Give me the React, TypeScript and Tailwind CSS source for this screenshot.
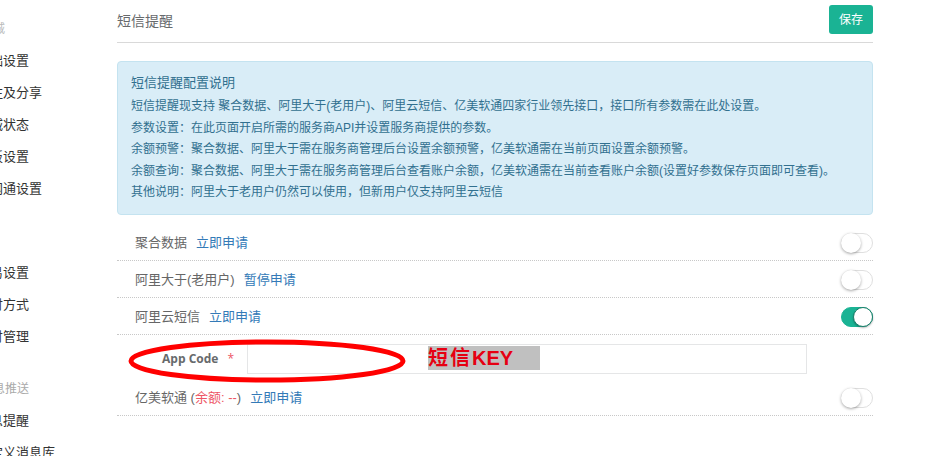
import React, { useState } from 'react';

const font = { fontFamily: '"Liberation Sans", "Noto Sans CJK SC", sans-serif' };

type NavEntry = { label: string; header?: boolean };

const nav: NavEntry[] = [
  { label: '商城', header: true },
  { label: '基础设置' },
  { label: '关注及分享' },
  { label: '商城状态' },
  { label: '模板设置' },
  { label: '全网通设置' },
  { label: '交', header: true },
  { label: '交易设置' },
  { label: '支付方式' },
  { label: '支付管理' },
  { label: '消息推送', header: true },
  { label: '消息提醒' },
  { label: '自定义消息库' },
];

function Sidebar() {
  return (
    <div className="w-[117px] shrink-0 overflow-hidden pt-[13px]">
      {nav.map((n, i) =>
        n.header ? (
          <div
            key={i}
            className={
              i === 0
                ? 'h-8 -ml-[19px] flex items-center whitespace-nowrap text-[12px] text-[#bbb]'
                : 'mt-5 h-8 -ml-[19px] flex items-center whitespace-nowrap text-[12px] text-[#aaa]'
            }
          >
            {n.label}
          </div>
        ) : (
          <div key={i} className="h-8 -ml-[23px] flex items-center whitespace-nowrap text-[13px] text-[#333]">
            {n.label}
          </div>
        )
      )}
    </div>
  );
}

function Toggle({ on, onClick }: { on: boolean; onClick: () => void }) {
  return (
    <button
      onClick={onClick}
      className={
        on
          ? 'relative w-[32px] h-[20px] rounded-full bg-[#1ab394] border border-[#1ab394] shrink-0'
          : 'relative w-[32px] h-[20px] rounded-full bg-white border border-[#dfdfdf] shrink-0'
      }
    >
      <span
        className={
          on
            ? 'absolute top-[-1px] right-[-1px] w-[20px] h-[20px] rounded-full bg-white border border-[#1a7f6a] shadow-[0_1px_2px_rgba(0,0,0,0.3)]'
            : 'absolute top-[-1px] left-[-1px] w-[20px] h-[20px] rounded-full bg-white shadow-[0_1px_3px_rgba(0,0,0,0.35)]'
        }
      />
    </button>
  );
}

function Row({ children, on, onToggle }: { children: React.ReactNode; on: boolean; onToggle: () => void }) {
  return (
    <div className="h-[37px] flex items-center justify-between pl-[18px] pt-[1px] border-b border-dotted border-[#c8c8c8]">
      <div className="flex items-center gap-[9px] text-[13px] text-[#666] leading-none">{children}</div>
      <Toggle on={on} onClick={onToggle} />
    </div>
  );
}

const Link = ({ children }: { children: React.ReactNode }) => (
  <a className="text-[#337ab7] cursor-pointer">{children}</a>
);

export default function App() {
  const [sw, setSw] = useState([false, false, true, false]);
  const flip = (i: number) => setSw(s => s.map((v, j) => (j === i ? !v : v)));

  return (
    <div className="w-[937px] h-[456px] overflow-hidden bg-white flex" style={font}>
      <Sidebar />
      <div className="w-[756px] shrink-0">
        <div className="h-[43px] flex items-start justify-between border-b border-[#d9d9d9]">
          <span className="text-[14px] leading-[42px] text-[#676a6c]">短信提醒</span>
          <button className="mt-[5px] w-[44px] h-[29px] rounded-[3px] bg-[#1ab394] text-white text-[12px]">保存</button>
        </div>

        <div className="mt-[18px] h-[154px] rounded-[4px] bg-[#d9edf7] border border-[#c4e3f0] px-[13px] pt-[11px] text-[#31708f]">
          <div className="text-[13px] leading-[20px] mb-[3px]">短信提醒配置说明</div>
          <div className="text-[12px] leading-[21.5px]">
            <p>短信提醒现支持 聚合数据、阿里大于(老用户)、阿里云短信、亿美软通四家行业领先接口，接口所有参数需在此处设置。</p>
            <p>参数设置：在此页面开启所需的服务商API并设置服务商提供的参数。</p>
            <p>余额预警：聚合数据、阿里大于需在服务商管理后台设置余额预警，亿美软通需在当前页面设置余额预警。</p>
            <p>余额查询：聚合数据、阿里大于需在服务商管理后台查看账户余额，亿美软通需在当前查看账户余额(设置好参数保存页面即可查看)。</p>
            <p>其他说明：阿里大于老用户仍然可以使用，但新用户仅支持阿里云短信</p>
          </div>
        </div>

        <div className="mt-[9px]">
          <Row on={sw[0]} onToggle={() => flip(0)}>
            <span>聚合数据</span>
            <Link>立即申请</Link>
          </Row>
          <Row on={sw[1]} onToggle={() => flip(1)}>
            <span>阿里大于(老用户)</span>
            <Link>暂停申请</Link>
          </Row>
          <Row on={sw[2]} onToggle={() => flip(2)}>
            <span>阿里云短信</span>
            <Link>立即申请</Link>
          </Row>

          <div className="relative flex items-center pt-[9px] pb-[5px]">
            <label className="w-[130px] shrink-0 flex justify-end items-center pr-[13px] text-[12px] font-bold text-[#676a6c]" style={{ fontFamily: '"Open Sans", sans-serif' }}>
              App Code<span className="ml-[9px] text-[#ed5565] font-normal">*</span>
            </label>
            <input className="w-[560px] h-[30px] border border-[#e5e6e7] px-3 text-[13px] outline-none" />
            <svg className="absolute left-[10px] top-[3px] overflow-visible pointer-events-none" width="282" height="46">
              <ellipse cx="140" cy="23" rx="136" ry="19" fill="none" stroke="#ff0000" strokeWidth="5" />
            </svg>
            <div className="absolute left-[311px] top-[11px] w-[112px] h-[24px] bg-[#c0c0c0] flex items-center text-[20px] text-[#e60012] leading-none pointer-events-none">
              <span className="tracking-[2px] font-semibold">短信</span>
              <span className="font-bold" style={{ fontFamily: '"Liberation Sans", sans-serif' }}>KEY</span>
            </div>
          </div>

          <Row on={sw[3]} onToggle={() => flip(3)}>
            <span>
              亿美软通 (<span className="text-[#ed5565]">余额: --</span>)
            </span>
            <Link>立即申请</Link>
          </Row>
        </div>
      </div>
    </div>
  );
}
